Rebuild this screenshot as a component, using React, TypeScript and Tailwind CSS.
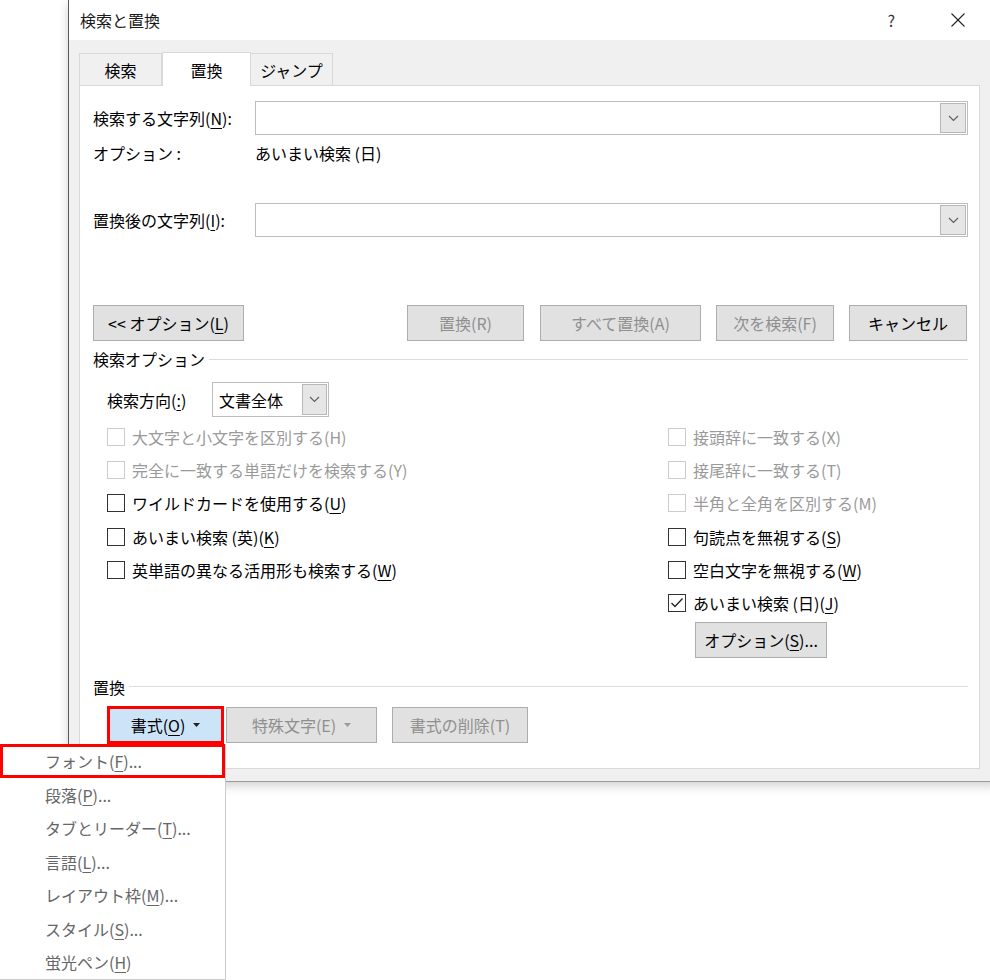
import React from "react";

const font = { fontFamily: '"Noto Sans CJK JP", "Noto Sans", sans-serif' };

function U({ children }: { children: React.ReactNode }) {
  return <span className="underline underline-offset-[3px] decoration-1">{children}</span>;
}

function Chevron() {
  return (
    <svg width="11" height="7" viewBox="0 0 11 7" fill="none">
      <polyline points="1,1 5.5,5.5 10,1" stroke="#606060" strokeWidth="1.2" />
    </svg>
  );
}

function Combo() {
  return (
    <div className="flex-1 h-[34px] border border-[#bdbdbd] bg-white flex justify-end p-px">
      <div className="w-[26px] h-full bg-[#e6e6e6] border border-[#b8b8b8] flex items-center justify-center">
        <Chevron />
      </div>
    </div>
  );
}

function Btn({
  children,
  disabled,
  className = "",
}: {
  children: React.ReactNode;
  disabled?: boolean;
  className?: string;
}) {
  return (
    <div
      className={`h-[36px] border border-[#adadad] bg-[#e1e1e1] flex items-center justify-center text-[16px] ${
        disabled ? "text-[#8f8f8f]" : "text-black"
      } ${className}`}
    >
      {children}
    </div>
  );
}

function Check({
  children,
  disabled,
  checked,
}: {
  children: React.ReactNode;
  disabled?: boolean;
  checked?: boolean;
}) {
  return (
    <div className="h-[33.3px] flex items-center gap-[7px]">
      <div
        className={`w-[18px] h-[18px] border bg-white flex items-center justify-center ${
          disabled ? "border-[#cccccc]" : "border-[#333333]"
        }`}
      >
        {checked && (
          <svg width="14" height="12" viewBox="0 0 14 12" fill="none">
            <polyline points="1.5,6 5,9.5 12.5,1.5" stroke="#222" strokeWidth="1.3" />
          </svg>
        )}
      </div>
      <span className={`text-[16px] ${disabled ? "text-[#9a9a9a]" : "text-black"}`}>{children}</span>
    </div>
  );
}

function Group({ title }: { title: string }) {
  return (
    <div className="h-[20px] flex items-center">
      <span className="text-[16px] text-black">{title}</span>
      <div className="flex-1 h-px bg-[#dcdcdc] ml-[4px]" />
    </div>
  );
}

function Caret({ color }: { color: string }) {
  return (
    <svg width="7" height="4" viewBox="0 0 7 4" className="ml-[8px]">
      <polygon points="0,0 7,0 3.5,4" fill={color} />
    </svg>
  );
}

export default function App() {
  const menu = [
    ["段落(", "P", ")..."],
    ["タブとリーダー(", "T", ")..."],
    ["言語(", "L", ")..."],
    ["レイアウト枠(", "M", ")..."],
    ["スタイル(", "S", ")..."],
    ["蛍光ペン(", "H", ")"],
  ];

  return (
    <div className="relative w-[990px] h-[980px] bg-white overflow-hidden text-black" style={font}>
      {/* dialog window */}
      <div className="ml-[68px] w-[930px] border-l border-[#5a5a5a] border-b border-b-[#9a9a9a] shadow-[0_4px_10px_rgba(0,0,0,0.18)]">
        {/* title bar */}
        <div className="h-[40px] bg-white flex items-center pl-[11px]">
          <span className="text-[16px] text-[#1a1a1a]">検索と置換</span>
          <span className="ml-auto text-[16px] text-[#333] mr-[56px]">?</span>
          <svg width="14" height="14" viewBox="0 0 14 14" className="mr-[33px]">
            <line x1="0.5" y1="0.5" x2="13.5" y2="13.5" stroke="#222" strokeWidth="1.1" />
            <line x1="13.5" y1="0.5" x2="0.5" y2="13.5" stroke="#222" strokeWidth="1.1" />
          </svg>
        </div>

        {/* body */}
        <div className="bg-[#f0f0f0] pl-[10px] pr-[10px] pt-[12px] pb-[12px]">
          {/* tabs */}
          <div className="flex items-end h-[33px] relative z-10">
            <div className="w-[83px] h-[32px] border border-b-0 border-[#d9d9d9] bg-[#f0f0f0] flex items-center justify-center text-[16px]">
              検索
            </div>
            <div className="w-[89px] h-[34px] -mb-px border border-b-0 border-[#d9d9d9] bg-white flex items-center justify-center text-[16px]">
              置換
            </div>
            <div className="w-[82px] h-[32px] border border-b-0 border-l-0 border-[#d9d9d9] bg-[#f0f0f0] flex items-center justify-center text-[16px]">
              ジャンプ
            </div>
          </div>

          {/* panel */}
          <div className="w-[901px] h-[684px] border border-[#d9d9d9] bg-white pl-[13px] pr-[11px]">
            <div className="mt-[15px] flex items-center">
              <span className="w-[162px] text-[16px]">
                検索する文字列(<U>N</U>):
              </span>
              <Combo />
            </div>
            <div className="mt-[8px] h-[20px] flex items-center text-[16px]">
              <span className="w-[162px]">オプション :</span>
              <span>あいまい検索 (日)</span>
            </div>
            <div className="mt-[40px] flex items-center">
              <span className="w-[162px] text-[16px]">
                置換後の文字列(<U>I</U>):
              </span>
              <Combo />
            </div>

            <div className="mt-[68px] flex items-center">
              <Btn className="w-[151px]">
                {"<< オプション("}
                <U>L</U>)
              </Btn>
              <Btn disabled className="w-[117px] ml-[163px]">
                置換(R)
              </Btn>
              <Btn disabled className="w-[161px] ml-[16px]">
                すべて置換(A)
              </Btn>
              <Btn disabled className="w-[118px] ml-[15px]">
                次を検索(F)
              </Btn>
              <Btn className="w-[118px] ml-[15px]">キャンセル</Btn>
            </div>

            <div className="mt-[8px]">
              <Group title="検索オプション" />
            </div>

            <div className="mt-[13px] ml-[14px] flex items-center">
              <span className="w-[105px] text-[16px]">
                検索方向(<U>:</U>)
              </span>
              <div className="w-[117px] h-[35px] border border-[#bdbdbd] flex items-center p-px">
                <span className="flex-1 pl-[5px] text-[16px]">文書全体</span>
                <div className="w-[25px] h-full bg-[#e6e6e6] border border-[#b8b8b8] flex items-center justify-center">
                  <Chevron />
                </div>
              </div>
            </div>

            <div className="mt-[3px] flex">
              <div className="w-[575px] pl-[14px]">
                <Check disabled>大文字と小文字を区別する(H)</Check>
                <Check disabled>完全に一致する単語だけを検索する(Y)</Check>
                <Check>
                  ワイルドカードを使用する(<U>U</U>)
                </Check>
                <Check>
                  あいまい検索 (英)(<U>K</U>)
                </Check>
                <Check>
                  英単語の異なる活用形も検索する(<U>W</U>)
                </Check>
              </div>
              <div className="flex-1">
                <Check disabled>接頭辞に一致する(X)</Check>
                <Check disabled>接尾辞に一致する(T)</Check>
                <Check disabled>半角と全角を区別する(M)</Check>
                <Check>
                  句読点を無視する(<U>S</U>)
                </Check>
                <Check>
                  空白文字を無視する(<U>W</U>)
                </Check>
                <Check checked>
                  あいまい検索 (日)(<U>J</U>)
                </Check>
                <Btn className="w-[132px] ml-[27px] mt-[2px]">
                  オプション(<U>S</U>)...
                </Btn>
              </div>
            </div>

            <div className="mt-[19px]">
              <Group title="置換" />
            </div>

            <div className="mt-[9px] ml-[14px] flex items-center">
              <div className="w-[117px] h-[38px] border-[3px] border-[#ff0000]">
                <div className="w-full h-full bg-[#cce4f7] flex items-center justify-center text-[16px]">
                  書式(<U>O</U>)
                  <Caret color="#222" />
                </div>
              </div>
              <Btn disabled className="w-[151px] ml-[2px] h-[35px]">
                特殊文字(E)
                <Caret color="#9a9a9a" />
              </Btn>
              <Btn disabled className="w-[136px] ml-[15px] h-[35px]">
                書式の削除(T)
              </Btn>
            </div>
          </div>
        </div>
      </div>

      {/* dropdown menu */}
      <div className="absolute left-0 top-[744px] w-[226px] bg-white border-r border-b border-[#cccccc] text-[16px] text-[#666666]">
        <div className="h-[34px] border-[3px] border-[#ff0000] flex items-center pl-[42px]">
          フォント(<U>F</U>)...
        </div>
        {menu.map(([a, b, c]) => (
          <div key={b} className="h-[33.5px] flex items-center pl-[45px]">
            {a}
            <U>{b}</U>
            {c}
          </div>
        ))}
      </div>
    </div>
  );
}
